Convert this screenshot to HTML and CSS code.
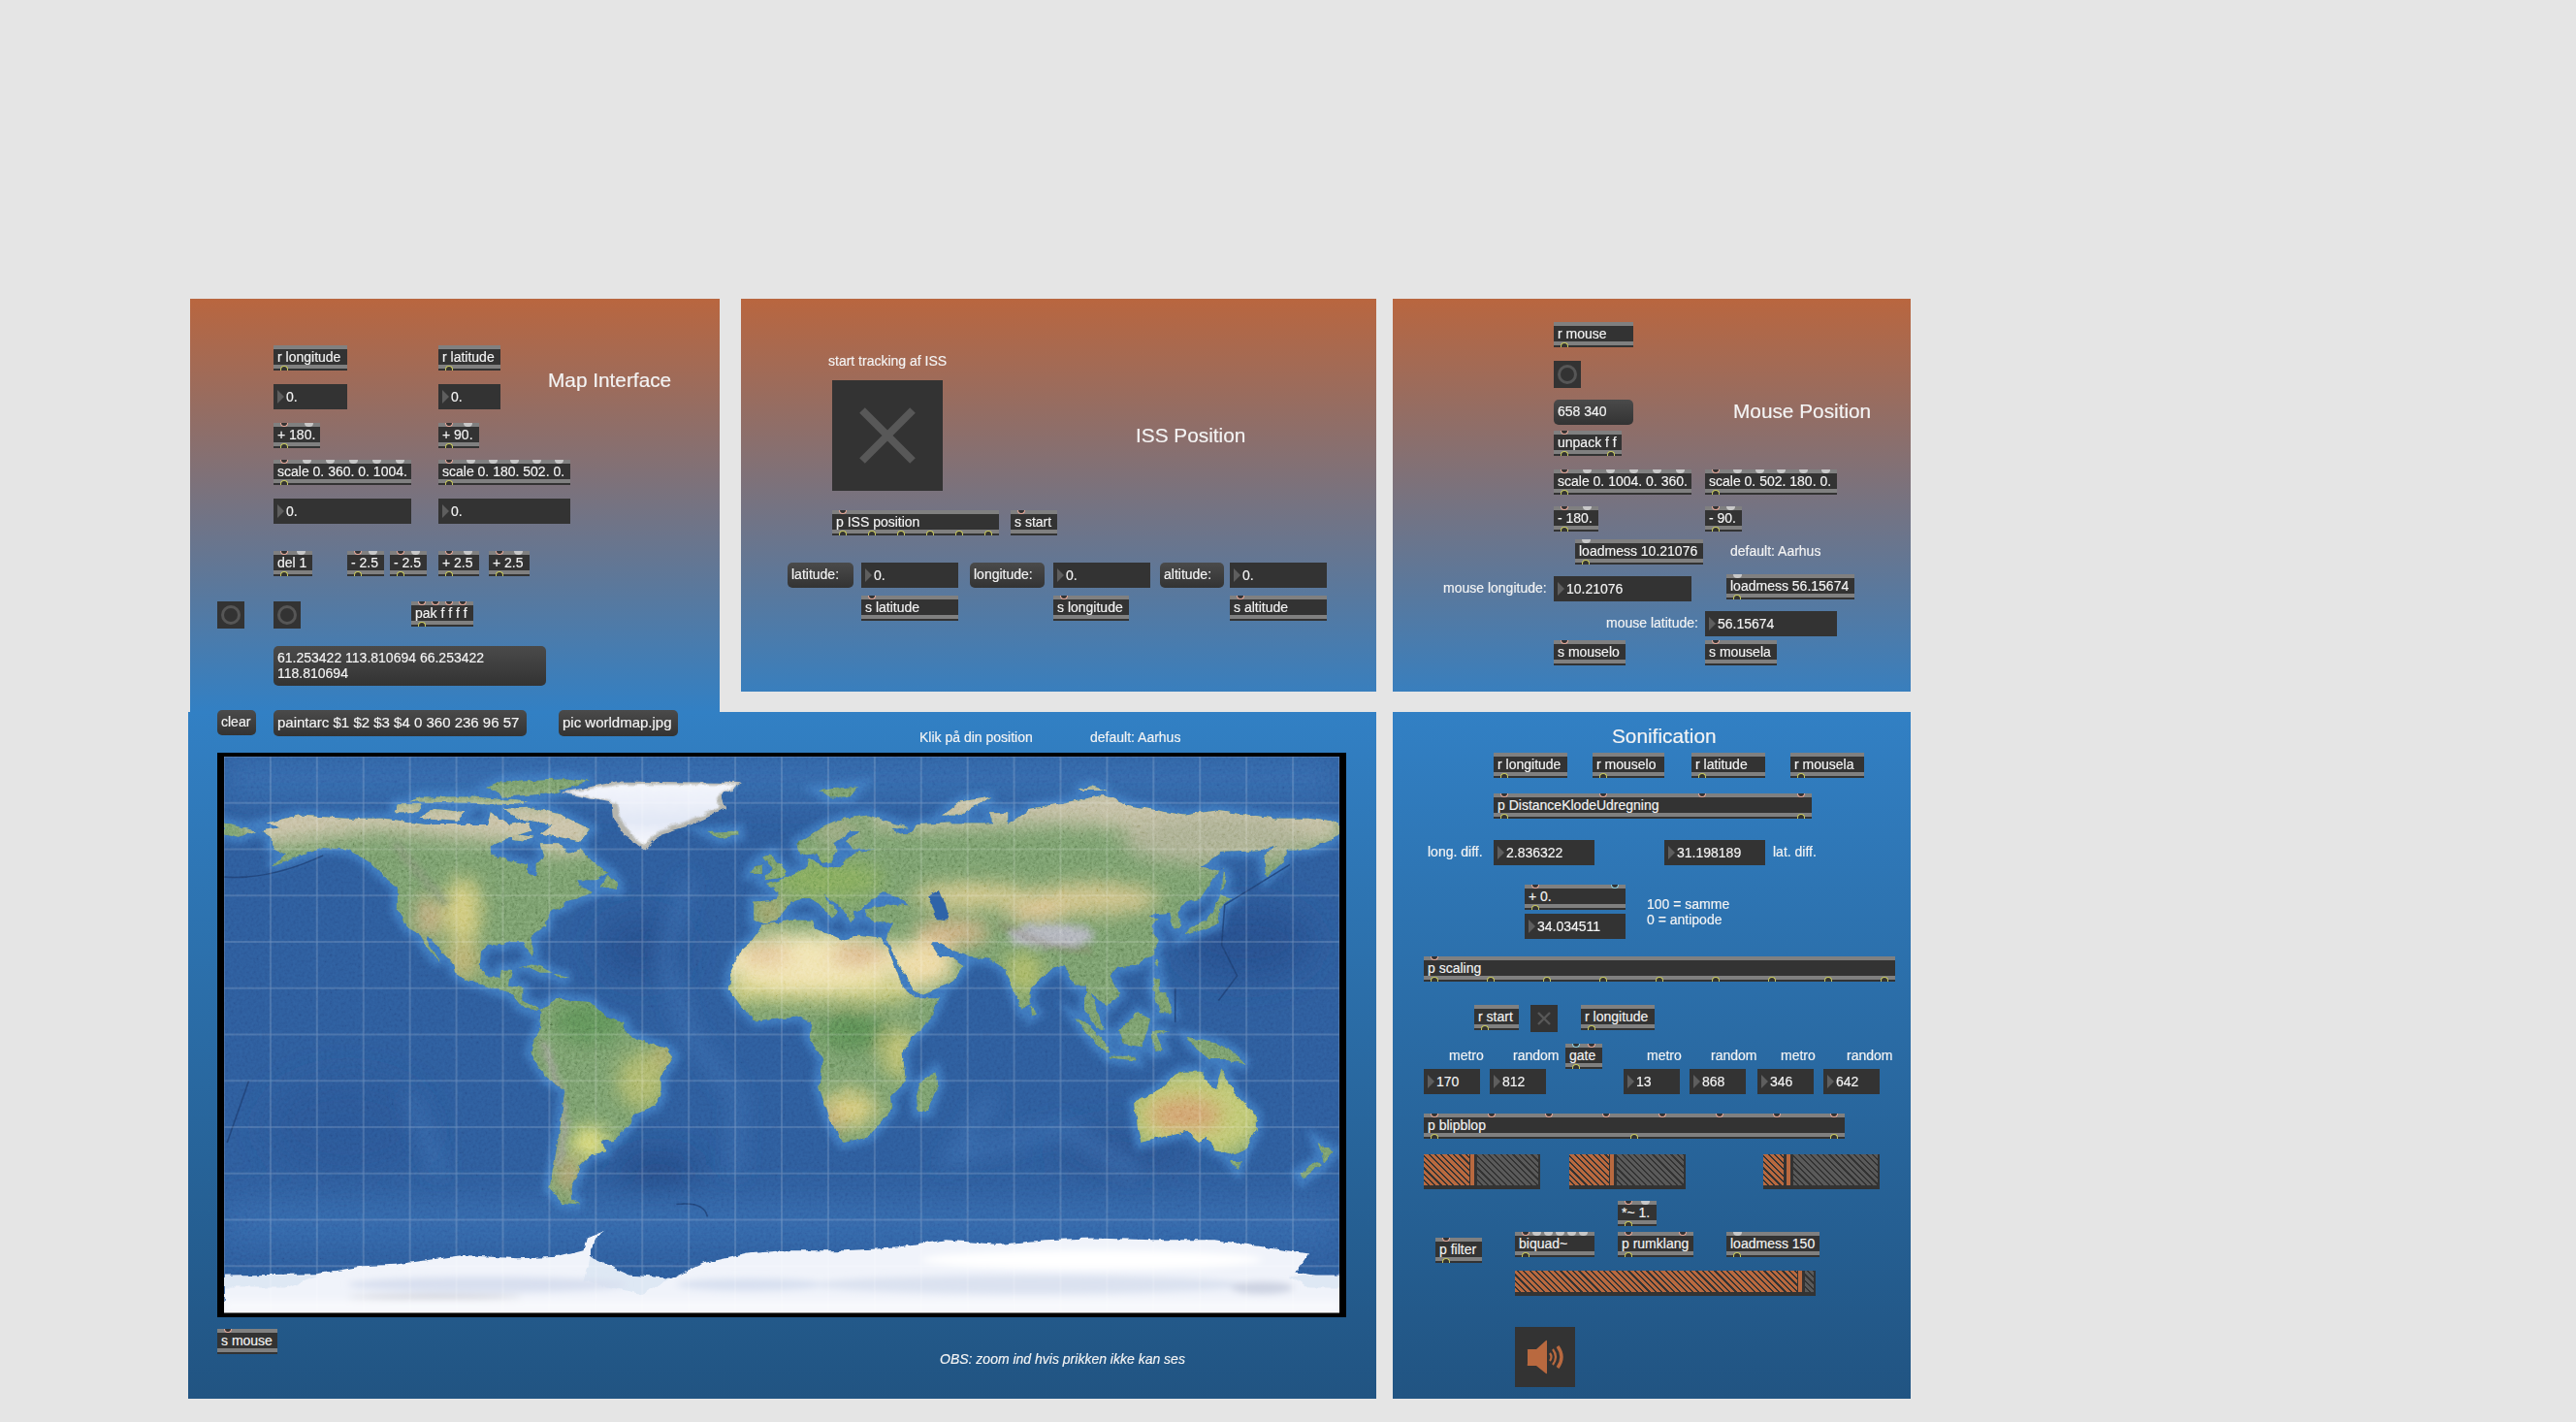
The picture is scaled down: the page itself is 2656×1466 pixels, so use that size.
FILE: index.html
```html
<!DOCTYPE html>
<html lang="en">
<head>
    <meta charset="UTF-8">
    <title>ISS Sonification Patch</title>
    <link rel="stylesheet" href="styles.css">
</head>
<body>
<div class="patch">
    <div class="toprow">
        <!-- Map Interface -->
        <section class="panel panel-map-ui">
            <div class="title m-title">Map Interface</div>
            <div class="obj m-rlong">r longitude<div class="outs"><i></i></div></div>
            <div class="obj m-rlat">r latitude<div class="outs"><i></i></div></div>
            <div class="num m-n1">0.</div>
            <div class="num m-n2">0.</div>
            <div class="obj m-add1"><div class="ins"><i></i><i class="cold"></i></div>+ 180.<div class="outs"><i></i></div></div>
            <div class="obj m-add2"><div class="ins"><i></i><i class="cold"></i></div>+ 90.<div class="outs"><i></i></div></div>
            <div class="obj m-sc1"><div class="ins"><i></i><i class="cold"></i><i class="cold"></i><i class="cold"></i><i class="cold"></i><i class="cold"></i></div>scale 0. 360. 0. 1004.<div class="outs"><i></i></div></div>
            <div class="obj m-sc2"><div class="ins"><i></i><i class="cold"></i><i class="cold"></i><i class="cold"></i><i class="cold"></i><i class="cold"></i></div>scale 0. 180. 502. 0.<div class="outs"><i></i></div></div>
            <div class="num m-n3">0.</div>
            <div class="num m-n4">0.</div>
            <div class="obj m-del"><div class="ins"><i></i><i class="cold"></i></div>del 1<div class="outs"><i></i></div></div>
            <div class="obj m-s1"><div class="ins"><i></i><i class="cold"></i></div>- 2.5<div class="outs"><i></i></div></div>
            <div class="obj m-s2"><div class="ins"><i></i><i class="cold"></i></div>- 2.5<div class="outs"><i></i></div></div>
            <div class="obj m-a1"><div class="ins"><i></i><i class="cold"></i></div>+ 2.5<div class="outs"><i></i></div></div>
            <div class="obj m-a2"><div class="ins"><i></i><i class="cold"></i></div>+ 2.5<div class="outs"><i></i></div></div>
            <div class="bang m-b1"></div>
            <div class="bang m-b2"></div>
            <div class="obj m-pak"><div class="ins"><i></i><i></i><i></i><i></i></div>pak f f f f<div class="outs"><i></i></div></div>
            <div class="msg m-list">61.253422 113.810694 66.253422 118.810694</div>
        </section>

        <!-- ISS Position -->
        <section class="panel panel-iss">
            <div class="label i-start">start tracking af ISS</div>
            <div class="toggle i-toggle">
                <svg viewBox="0 0 114 114"><path d="M31 31L83 83M83 31L31 83" stroke="#585858" stroke-width="8" fill="none"/></svg>
            </div>
            <div class="title i-title">ISS Position</div>
            <div class="obj i-p"><div class="ins"><i></i></div>p ISS position<div class="outs"><i></i><i></i><i></i><i></i><i></i><i></i></div></div>
            <div class="obj i-sstart"><div class="ins"><i></i></div>s start</div>
            <div class="msg i-m1">latitude:</div>
            <div class="num i-n1">0.</div>
            <div class="msg i-m2">longitude:</div>
            <div class="num i-n2">0.</div>
            <div class="msg i-m3">altitude:</div>
            <div class="num i-n3">0.</div>
            <div class="obj i-s1"><div class="ins"><i></i></div>s latitude</div>
            <div class="obj i-s2"><div class="ins"><i></i></div>s longitude</div>
            <div class="obj i-s3"><div class="ins"><i></i></div>s altitude</div>
        </section>
    </div>

    <!-- Mouse Position -->
    <section class="panel panel-mouse">
        <div class="title p-title">Mouse Position</div>
        <div class="obj p-r">r mouse<div class="outs"><i></i></div></div>
        <div class="bang p-b"></div>
        <div class="msg p-msg">658 340</div>
        <div class="obj p-unp"><div class="ins"><i></i></div>unpack f f<div class="outs"><i></i><i></i></div></div>
        <div class="obj p-sc1"><div class="ins"><i></i><i class="cold"></i><i class="cold"></i><i class="cold"></i><i class="cold"></i><i class="cold"></i></div>scale 0. 1004. 0. 360.<div class="outs"><i></i></div></div>
        <div class="obj p-sc2"><div class="ins"><i></i><i class="cold"></i><i class="cold"></i><i class="cold"></i><i class="cold"></i><i class="cold"></i></div>scale 0. 502. 180. 0.<div class="outs"><i></i></div></div>
        <div class="obj p-m1"><div class="ins"><i></i><i class="cold"></i></div>- 180.<div class="outs"><i></i></div></div>
        <div class="obj p-m2"><div class="ins"><i></i><i class="cold"></i></div>- 90.<div class="outs"><i></i></div></div>
        <div class="obj p-l1"><div class="ins"><i class="cold"></i></div>loadmess 10.21076<div class="outs"><i></i></div></div>
        <div class="label p-def">default: Aarhus</div>
        <div class="label p-lonl">mouse longitude:</div>
        <div class="num p-n1">10.21076</div>
        <div class="obj p-l2"><div class="ins"><i class="cold"></i></div>loadmess 56.15674<div class="outs"><i></i></div></div>
        <div class="label p-latl">mouse latitude:</div>
        <div class="num p-n2">56.15674</div>
        <div class="obj p-s1"><div class="ins"><i></i></div>s mouselo</div>
        <div class="obj p-s2"><div class="ins"><i></i></div>s mousela</div>
    </section>

    <!-- World map -->
    <section class="panel panel-world">
        <div class="msg w-clear">clear</div>
        <div class="msg w-arc">paintarc $1 $2 $3 $4 0 360 236 96 57</div>
        <div class="msg w-pic">pic worldmap.jpg</div>
        <div class="label w-klik">Klik på din position</div>
        <div class="label w-def">default: Aarhus</div>
        <div class="mapframe">
            <svg class="worldmap" viewBox="-180 -90 360 180" preserveAspectRatio="none">
                <defs>
                    <path id="land" d="M-168 -66L-162 -67L-166 -68.5L-156 -71L-141 -70L-128 -70L-115 -68L-108 -68L-95 -68L-94 -72L-88 -68L-82 -69L-81 -66L-87 -64L-94 -61L-94 -58.5L-88 -56.5L-82 -55L-82 -52L-79 -51.5L-79 -55L-77 -57L-78 -62L-72 -62L-69 -59L-65 -60L-61 -56L-56 -52.5L-60 -50L-66 -50L-65 -48L-61 -46L-66 -44L-70 -43L-70 -41.5L-74 -40.5L-76 -37L-76 -35L-81 -31.5L-80 -27L-80.5 -25L-82 -27L-83 -30L-88 -30L-90 -29L-94 -29.5L-97 -27L-97.5 -22L-95 -18.5L-91 -18.5L-90.5 -21L-87 -21L-88 -16L-83.5 -15L-83.5 -11L-80 -9L-77.5 -8.5L-80 -7.5L-84 -9L-87 -13L-92 -14.5L-96 -16L-102 -18L-105.5 -20.5L-106 -23L-109 -26L-113 -31L-115 -31.5L-112 -26L-110 -23L-112 -25L-115 -29L-117 -32.5L-120.5 -34.5L-124 -40L-124 -48L-128 -51L-133 -56L-140 -60L-148 -60.5L-152 -59L-158 -57L-165 -54.5L-160 -58.5L-165 -61L-165 -64Z
                    M-80 -73.5L-72 -71.5L-62 -66.5L-65 -62.5L-72 -64L-78 -65L-74 -68L-85 -70L-90 -73Z
                    M-117 -70L-105 -69L-102 -72L-112 -73Z
                    M-125 -72L-118 -72L-116 -74.5L-124 -74.5Z
                    M-90 -77L-75 -78L-62 -82L-70 -83L-90 -82L-95 -80Z
                    M-120 -75.5L-100 -75L-85 -74.5L-82 -75.5L-100 -77L-117 -77Z
                    M-87 -65L-80 -64L-83 -62.5L-87 -63Z
                    M-59 -48L-53 -47L-53 -49L-56 -51.5Z
                    M-85 -22L-80 -23L-74 -20L-78 -20L-82 -22Z
                    M-74 -19.5L-68.5 -18.5L-71 -18Z
                    M-78 -8L-72 -12L-68 -11L-62 -10.5L-57 -6L-51 -4L-50 0L-44 2.5L-37 4.5L-35 7L-39 14L-39 20L-41 23L-48 26L-49 29L-54 34.5L-58 34.5L-57 38L-62 39L-65 42L-65.5 45L-68 50L-68 53L-65 55L-71 54.5L-75 50L-73.5 42L-71.5 30L-70 18L-76 14L-81 6L-80 2L-78 -2L-77.5 -7Z
                    M-6 -35.5L3 -37L10 -37L11 -34L19 -30.5L25 -32L32 -31L34 -28L37 -21L39 -15.5L43 -12L51 -12L48 -5L42 1L39 6L40 15L35 20L35.5 24L32.5 28L28 33L20 35L18 33L15 26L12 17L13.5 8L9 1L9.5 -4L5 -6L-4 -5L-8 -4.5L-13 -9L-17 -14.5L-16 -21L-13 -27.5L-10 -30Z
                    M49.5 12L50.5 16L47 25L44 25L43.5 20L44.5 16Z
                    M-9 -37L-9 -43L-2 -43.5L-1 -46L-5 -48.5L2 -51L8 -54L8.5 -57L11 -55.5L14 -54L19 -54.5L21 -57L24 -59L30 -60L23 -60L21 -63L25 -65.5L22 -65.5L17 -62L18 -59.5L16 -56L13 -55.5L11 -59L6 -58L5 -62L13 -67L20 -70L28 -71L41 -67L35 -66.5L40 -64.5L44 -68L54 -68.5L68 -68.5L67 -72L73 -72L73 -68L80 -73L104 -77.5L113 -74L130 -71L140 -72.5L160 -70L170 -70L180 -68.5L180 -65L177 -62.5L170 -60L163 -60L162 -56L156.5 -51L155.5 -57L160 -61.5L155 -59.5L142 -59L135 -54.5L141 -53L135 -44L130 -42.5L127.5 -39.5L129 -35.5L126.5 -34.5L125 -39.5L121 -39L118 -39L122 -37L119 -35L122 -30.5L120 -26L114 -22.5L108 -21.5L106 -19L109 -13L105 -9L100 -13.5L103 -4L104 -1.5L101 -3L98 -8L98 -16L94.5 -16L91 -22.5L87 -21L80 -15L80 -10L77.5 -8L73 -19L72.5 -21L67 -24.5L61 -25L57 -26.5L50 -30L48 -29.5L51 -25L55 -25L59 -22.5L55 -17L45 -13L43 -14L39 -21L35 -28L34 -31L36 -36.5L30 -36.5L27 -38L27 -40.5L36 -42L41 -41.5L37 -45L33 -46L28 -43L26 -40.5L23 -40L24 -37.5L22 -36.5L19 -41.5L13 -45.5L18 -40L16 -38L12.5 -42L8.5 -44.5L3 -43L0 -39.5L-2 -36.7L-5.5 -36Z
                    M-180 -68.5L-170 -66L-175 -64L-180 -65Z
                    M-5.5 -50L1 -51L1.5 -53L-2 -56L-3 -58.5L-6 -57L-3 -54L-5 -52Z
                    M-10 -52L-6 -52L-6 -55L-9 -54.5Z
                    M-24 -65.5L-14 -66L-14 -64.5L-20 -63.5Z
                    M130 -32L136 -34L141 -36L141.5 -41L145 -44L141.5 -45L140 -41L137 -37L132 -35Z
                    M142 -46L143.5 -50L142.5 -54L142 -50Z
                    M120 -23L121.5 -25L121 -22Z
                    M120 -18L122 -18L122 -14L124 -13L126 -7L122 -7L120 -14Z
                    M95 -5.5L98 -4L104 2L106 6L102 4L98 -1Z
                    M105.5 7L114 7L114.5 8.5L106 7.5Z
                    M109 -1L115 -7L119 -5L117.5 0L116 4L110 3Z
                    M119.5 -1L125 -1L121 0L123 5L120 5.5Z
                    M131 1L141 3L146 6L150 10L144 8L138 8L133 4Z
                    M80 -9.5L82 -7L80.5 -6Z
                    M114 22L122 18L126 14L130 12L136 12L136 15L140 17.5L142 11L146 19L153 26L153 31L150 37L145 39L140 37.5L137 33L135 35L131 31.5L124 33L116 35L115 31Z
                    M145 41L148 41L147 43.5Z
                    M173 35L178 38L175 41.5L174 38Z
                    M173 41L174 42L168 47L167 45Z
                    M12 -79L25 -80.5L22 -77L15 -77Z
                    M52 -71L57 -71L68 -77L58 -75.5Z
                    M95 -79L105 -79L100 -80.5Z"/>
                    <clipPath id="landclip"><use href="#land"/></clipPath>
                    <filter id="blur05"><feGaussianBlur stdDeviation="0.4"/></filter>
                    <filter id="blur1"><feGaussianBlur stdDeviation="1.2"/></filter>
                    <filter id="blur3"><feGaussianBlur stdDeviation="3"/></filter>
                    <filter id="blur6"><feGaussianBlur stdDeviation="5"/></filter>
                    <filter id="rough" x="-2%" y="-2%" width="104%" height="104%">
                        <feTurbulence type="fractalNoise" baseFrequency="0.3" numOctaves="3" seed="4"/>
                        <feDisplacementMap in="SourceGraphic" scale="1.8" xChannelSelector="R" yChannelSelector="G"/>
                    </filter>
                    <filter id="grain" x="0" y="0" width="100%" height="100%">
                        <feTurbulence type="fractalNoise" baseFrequency="1.1" numOctaves="3" seed="9"/>
                        <feColorMatrix type="matrix" values="1.3 0 0 0 -0.15 1.3 0 0 0 -0.15 1.3 0 0 0 -0.15 0 0 0 0 1"/>
                    </filter>
                    <linearGradient id="ice" x1="0" x2="0" y1="0" y2="1">
                        <stop offset="0" stop-color="#f4f6fc"/>
                        <stop offset="0.6" stop-color="#e2e8f6"/>
                        <stop offset="1" stop-color="#f7f8fd"/>
                    </linearGradient>
                    <pattern id="grid" x="7.5" y="7.5" width="15" height="15" patternUnits="userSpaceOnUse">
                        <path d="M7.5 0V15M0 7.5H15" stroke="#fff" stroke-opacity="0.28" stroke-width="0.32" fill="none"/>
                    </pattern>
                </defs>

                <!-- ocean -->
                <rect x="-180" y="-90" width="360" height="180" fill="#2d5b9b"/>
                <g filter="url(#blur6)">
                    <rect x="-180" y="-90" width="360" height="14" fill="#3669ac"/>
                    <rect x="-180" y="54" width="360" height="14" fill="#3467aa"/>
                    <ellipse cx="-45" cy="-28" rx="14" ry="10" fill="#284f8c"/>
                    <ellipse cx="-40" cy="44" rx="14" ry="5" fill="#234781"/>
                    <ellipse cx="150" cy="-30" rx="22" ry="12" fill="#28508d"/>
                    <ellipse cx="110" cy="38" rx="22" ry="7" fill="#2a5390"/>
                    <ellipse cx="-140" cy="30" rx="26" ry="16" fill="#2b5796"/>
                </g>
                <path d="M-30 -50L-38 -25L-30 0L-14 20L-15 45M68 20L55 40L90 30L115 45M-120 20L-110 45" stroke="#3869ab" stroke-width="4" fill="none" filter="url(#blur3)"/>
                <use href="#land" fill="none" stroke="#3e77bd" stroke-width="4" filter="url(#blur1)"/>
                <path d="M-180 -51Q-165 -50 -148 -58M164 -55L143 -42L142 -29L147 -19L141 -11M127 -15L127 -4M-172 15L-179 35M-34 55Q-25 54 -24 59" fill="none" stroke="#1f3f72" stroke-width="0.5" stroke-opacity="0.85"/>
                <rect class="grain-sea" x="-180" y="-90" width="360" height="180" filter="url(#grain)"/>

                <!-- land -->
                <g filter="url(#rough)">
                    <use href="#land" fill="#6f9c5e"/>
                    <g clip-path="url(#landclip)">
                        <g filter="url(#blur3)">
                            <path d="M-175 -75H-60V-60L-72 -58L-85 -62L-110 -64L-130 -66L-170 -61Z" fill="#c6bea2"/>
                            <path d="M30 -82H180V-62L150 -61L120 -66L90 -68L60 -67L30 -67Z" fill="#bfba9d"/>
                            <ellipse cx="140" cy="-63" rx="30" ry="8" fill="#a7ab8c"/>
                            <ellipse cx="-103" cy="-40" rx="6" ry="11" fill="#d0c878"/>
                            <ellipse cx="-114" cy="-38" rx="4" ry="7" fill="#c3a97a"/>
                            <ellipse cx="-103" cy="-24" rx="6" ry="6" fill="#b9ae6e"/>
                            <rect x="-18" y="-17" width="60" height="6" fill="#d6cf7a"/>
                            <ellipse cx="10" cy="-24" rx="32" ry="9" fill="#f0e2ae"/>
                            <ellipse cx="25" cy="-26" rx="9" ry="3" fill="#d4a77c"/>
                            <ellipse cx="-5" cy="-26" rx="8" ry="3" fill="#dfbb8e"/>
                            <ellipse cx="23" cy="-1" rx="11" ry="6" fill="#568650"/>
                            <ellipse cx="38" cy="6" rx="6" ry="8" fill="#b8bc6d"/>
                            <ellipse cx="22" cy="24" rx="9" ry="6" fill="#d3c878"/>
                            <ellipse cx="16" cy="28" rx="3" ry="4" fill="#c99d6e"/>
                            <ellipse cx="46" cy="-23" rx="10" ry="8" fill="#ecd8a0"/>
                            <ellipse cx="55" cy="-33" rx="12" ry="4" fill="#d1ae80"/>
                            <ellipse cx="62" cy="-45" rx="20" ry="4" fill="#d4c585"/>
                            <ellipse cx="100" cy="-44" rx="22" ry="5" fill="#cfc083"/>
                            <ellipse cx="82" cy="-39" rx="10" ry="3" fill="#dcc08f"/>
                            <ellipse cx="78" cy="-20" rx="6" ry="7" fill="#a7b564"/>
                            <ellipse cx="15" cy="-50" rx="18" ry="6" fill="#7fa658"/>
                            <ellipse cx="-4" cy="-40" rx="4" ry="3" fill="#c1a86a"/>
                            <ellipse cx="18" cy="-66" rx="7" ry="5" fill="#97a47c"/>
                            <ellipse cx="-62" cy="-4" rx="12" ry="7" fill="#5b8b55"/>
                            <ellipse cx="-45" cy="15" rx="8" ry="9" fill="#a9b468"/>
                            <ellipse cx="-38" cy="7" rx="3" ry="4" fill="#c3ae6b"/>
                            <ellipse cx="-62" cy="35" rx="6" ry="5" fill="#e2de78"/>
                            <ellipse cx="-69" cy="45" rx="3" ry="6" fill="#bf9f6f"/>
                            <ellipse cx="134" cy="26" rx="22" ry="14" fill="#bcc46e"/>
                            <ellipse cx="130" cy="26" rx="12" ry="6" fill="#cf9f6c"/>
                        </g>
                        <g filter="url(#blur1)">
                            <ellipse cx="87" cy="-32" rx="14" ry="4" fill="#adb0b8"/>
                            <path d="M-77 2L-72 18L-70 30L-72 42" stroke="#9a9892" stroke-width="2" fill="none"/>
                            <path d="M-125 -62L-115 -50L-108 -42" stroke="#7f8f72" stroke-width="2" fill="none"/>
                            <path d="M70 -36L85 -29L100 -27" stroke="#7a6f5c" stroke-width="1" fill="none"/>
                        </g>
                        <rect class="grain-land" x="-180" y="-90" width="360" height="180" filter="url(#grain)"/>
                    </g>
                    <!-- Caspian -->
                    <path d="M47 -45L51 -47L53 -42L54 -37L50 -37.5L49 -41Z" fill="#2f63a8"/>
                    <!-- Greenland and Antarctica -->
                    <path d="M-71 -78.4L-53 -82L-12.5 -81.5L-19.5 -77.4L-18 -73L-29 -68L-39 -65L-44 -60L-50 -64L-54.5 -70L-55 -75Z" fill="#b5b5ae"/>
                    <path d="M-70 -78.4L-52 -81L-14 -81L-21 -77L-20 -73.5L-30 -69L-40 -66L-44 -61L-48.5 -64.5L-52 -70L-53 -75Z" fill="url(#ice)" filter="url(#blur05)"/>
                    <path d="M-180 78L-150 77.5L-135 75L-125 74.5L-103 71.5L-85 72.5L-72 72L-64 70L-63 66L-57 63.5L-60 66L-62 70L-62 75L-49 78L-36 79L-25 74L-11 71L0 70L20 70L38 69L53 66.5L70 68L85 66.5L100 66L120 66.5L140 66.5L160 69.5L170 71L166 77L172 78L180 78L180 92L-180 92Z" fill="#f0f3fa"/>
                    <path d="M-180 78L-150 78L-160 82L-180 82Z M-62 72L-49 78L-36 79L-45 84L-64 80Z M164 78L180 78L180 82L170 82Z" fill="#dee8f4"/>
                </g>
                <!-- ice shading -->
                <g filter="url(#blur1)">
                    <ellipse cx="-95" cy="81" rx="45" ry="2.5" fill="#d8dfef"/>
                    <ellipse cx="-112" cy="85" rx="28" ry="0.4" fill="#a8a9b2"/>
                    <ellipse cx="-10" cy="81" rx="24" ry="2" fill="#d8e0f0"/>
                    <ellipse cx="80" cy="81" rx="70" ry="3" fill="#dbe2f0"/>
                    <ellipse cx="100" cy="73" rx="55" ry="3" fill="#ffffff"/>
                    <ellipse cx="155" cy="82" rx="10" ry="2" fill="#cdd3e2"/>
                    <rect x="-180" y="86" width="360" height="4" fill="#f8f9fd"/>
                </g>
                <rect x="-180" y="-90" width="360" height="180" fill="url(#grid)"/>
            </svg>
        </div>
        <div class="obj w-smouse"><div class="ins"><i></i></div>s mouse</div>
        <div class="label w-obs">OBS: zoom ind hvis prikken ikke kan ses</div>
    </section>

    <!-- Sonification -->
    <section class="panel panel-sound">
        <div class="title s-title">Sonification</div>
        <div class="obj s-r1">r longitude<div class="outs"><i></i></div></div>
        <div class="obj s-r2">r mouselo<div class="outs"><i></i></div></div>
        <div class="obj s-r3">r latitude<div class="outs"><i></i></div></div>
        <div class="obj s-r4">r mousela<div class="outs"><i></i></div></div>
        <div class="obj s-dist"><div class="ins"><i></i><i></i><i></i><i></i></div>p DistanceKlodeUdregning<div class="outs"><i></i><i></i></div></div>
        <div class="label s-long">long. diff.</div>
        <div class="num s-n1">2.836322</div>
        <div class="num s-n2">31.198189</div>
        <div class="label s-lat">lat. diff.</div>
        <div class="obj s-add"><div class="ins"><i></i><i class="sig"></i></div>+ 0.<div class="outs"><i></i></div></div>
        <div class="num s-n3">34.034511</div>
        <div class="label s-same">100 = samme</div>
        <div class="label s-anti">0 = antipode</div>
        <div class="obj s-scaling"><div class="ins"><i></i></div>p scaling<div class="outs"><i></i><i></i><i></i><i></i><i></i><i></i><i></i><i></i><i></i></div></div>
        <div class="obj s-rstart">r start<div class="outs"><i></i></div></div>
        <div class="toggle s-toggle">
            <svg viewBox="0 0 28 28"><path d="M8 8L20 20M20 8L8 20" stroke="#585858" stroke-width="2.4" fill="none"/></svg>
        </div>
        <div class="obj s-r5">r longitude<div class="outs"><i></i></div></div>
        <div class="label s-t1">metro</div>
        <div class="label s-t2">random</div>
        <div class="obj s-gate"><div class="ins"><i class="sig"></i><i></i></div>gate<div class="outs"><i></i></div></div>
        <div class="label s-t3">metro</div>
        <div class="label s-t4">random</div>
        <div class="label s-t5">metro</div>
        <div class="label s-t6">random</div>
        <div class="num s-i1">170</div>
        <div class="num s-i2">812</div>
        <div class="num s-i3">13</div>
        <div class="num s-i4">868</div>
        <div class="num s-i5">346</div>
        <div class="num s-i6">642</div>
        <div class="obj s-blip"><div class="ins"><i></i><i></i><i></i><i></i><i></i><i></i><i></i><i></i></div>p blipblop<div class="outs"><i></i><i></i><i></i></div></div>
        <div class="gain s-g1"><div class="fill"></div><div class="knob"></div><div class="rest"></div></div>
        <div class="gain s-g2"><div class="fill"></div><div class="knob"></div><div class="rest"></div></div>
        <div class="gain s-g3"><div class="fill"></div><div class="knob"></div><div class="rest"></div></div>
        <div class="obj s-mul"><div class="ins"><i></i><i class="cold"></i></div>*~ 1.<div class="outs"><i></i></div></div>
        <div class="obj s-filter"><div class="ins"><i></i></div>p filter<div class="outs"><i></i></div></div>
        <div class="obj s-biquad"><div class="ins"><i></i><i class="cold"></i><i class="cold"></i><i class="cold"></i><i class="cold"></i><i class="cold"></i></div>biquad~<div class="outs"><i></i></div></div>
        <div class="obj s-rum"><div class="ins"><i></i><i></i></div>p rumklang<div class="outs"><i></i></div></div>
        <div class="obj s-load"><div class="ins"><i class="cold"></i></div>loadmess 150<div class="outs"><i></i></div></div>
        <div class="gain s-master"><div class="fill"></div><div class="knob"></div><div class="rest"></div></div>
        <div class="ezdac">
            <svg viewBox="0 0 62 62">
                <path d="M13 24Q12 23 14 23H22L32 14Q33 13 33 15V47Q33 49 32 48L22 40H14Q12 40 13 38Z" fill="#b9693f"/>
                <g fill="none" stroke="#b9693f" stroke-width="2.2">
                    <path d="M36 27Q39 31 36 35"/>
                    <path d="M39 23Q45 31 39 39"/>
                </g>
                <path d="M44 20Q52 31 44 42" fill="none" stroke="#b9693f" stroke-width="3.4"/>
            </svg>
        </div>
    </section>
</div>
</body>
</html>
```

FILE: styles.css
```css
html, body {
    margin: 0;
    padding: 0;
    height: 100%;
    overflow: hidden;
    background-color: #e5e5e5;
}
body {
    font-family: "Liberation Sans", Arial, sans-serif;
    font-size: 14px;
    color: #f4f4f4;
    -webkit-text-stroke: 0.15px;
}

/* panels sit in a plain grid, the patch objects float on top of them */
.patch {
    display: grid;
    grid-template-columns: 1225px 534px;
    grid-template-rows: 426px 708px;
    column-gap: 17px;
    margin: 308px 0 0 194px;
}
.toprow {
    display: flex;
    align-items: flex-start;
    gap: 22px;
    padding-left: 2px;
}
.panel {
    position: relative;
    background: linear-gradient(#b9663f 308px, #3280c4 734px, #215482 1442px) fixed;
}
.panel-map-ui { width: 546px; height: 426px; }
.panel-iss { width: 655px; height: 405px; }
.panel-mouse { height: 405px; }
.panel-world, .panel-sound { height: 708px; }

/* Max objects */
.obj, .num, .msg, .bang, .toggle, .gain, .ezdac {
    position: absolute;
    box-sizing: border-box;
    background-color: #333;
}
.obj {
    height: 26px;
    padding: 0 4px;
    line-height: 25px;
    white-space: nowrap;
    background: linear-gradient(#808080 4px, #333 4px 20px, #808080 20px 24px, #333 24px);
}
.num {
    height: 26px;
    padding-left: 13px;
    line-height: 26px;
}
.num::before {
    content: "";
    position: absolute;
    left: 4px;
    top: 6px;
    border-left: 7px solid #5e5e5e;
    border-top: 7px solid transparent;
    border-bottom: 7px solid transparent;
}
.msg {
    height: 25.5px;
    padding: 0 4px;
    border-radius: 5px;
    line-height: 25px;
    white-space: nowrap;
    background: linear-gradient(#4a4a4a, #333);
}
.bang {
    width: 28px;
    height: 28px;
}
.bang::after {
    content: "";
    position: absolute;
    left: 4px;
    top: 4px;
    width: 20px;
    height: 20px;
    box-sizing: border-box;
    border: 3px solid #565656;
    border-radius: 50%;
}
.toggle svg, .ezdac svg {
    display: block;
    width: 100%;
    height: 100%;
}

/* inlets and outlets */
.ins, .outs {
    position: absolute;
    left: 7px;
    right: 7px;
    display: flex;
    justify-content: space-between;
}
.ins { top: 0; }
.outs { bottom: 0; }
.ins i, .outs i {
    display: block;
    box-sizing: border-box;
    width: 8px;
    height: 4px;
    background-color: #333;
}
.ins i {
    border: 1px solid #eaa99a;
    border-top: 0;
    border-radius: 0 0 5px 5px;
}
.ins i.cold {
    width: 9px;
    background-color: #c8c8c8;
    border: 0;
}
.ins i.sig { border-color: #8fd4e4; }
.outs i {
    height: 5px;
    border: 1px solid #c8c95e;
    border-bottom: 0;
    border-radius: 5px 5px 0 0;
}

/* gain sliders */
.gain {
    display: flex;
    padding-bottom: 4px;
    padding-right: 2px;
}
.gain .fill {
    background: repeating-linear-gradient(45deg, #b9693f 0 3px, #333 3px 4.5px);
}
.gain .knob {
    width: 4px;
    margin-left: 1px;
    background-color: #b9693f;
}
.gain .rest {
    flex: 1;
    margin-left: 3px;
    background: repeating-linear-gradient(45deg, #5a5a5a 0 3px, #333 3px 4.5px);
}

.label {
    position: absolute;
    line-height: 20px;
    white-space: nowrap;
}
.title {
    position: absolute;
    font-size: 20.8px;
    line-height: 24px;
    white-space: nowrap;
}

/* Map Interface */
.m-title { left: 369px; top: 72px; }
.m-rlong { left: 86px; top: 48px; width: 76px; }
.m-rlat { left: 256px; top: 48px; width: 64px; }
.m-n1 { left: 86px; top: 88px; width: 76px; }
.m-n2 { left: 256px; top: 88px; width: 64px; }
.m-add1 { left: 86px; top: 128px; width: 48px; }
.m-add2 { left: 256px; top: 128px; width: 42px; }
.m-sc1 { left: 86px; top: 166px; width: 142px; }
.m-sc2 { left: 256px; top: 166px; width: 136px; }
.m-n3 { left: 86px; top: 206px; width: 142px; }
.m-n4 { left: 256px; top: 206px; width: 136px; }
.m-del { left: 86px; top: 260px; width: 40px; }
.m-s1 { left: 162px; top: 260px; width: 38px; }
.m-s2 { left: 206px; top: 260px; width: 38px; }
.m-a1 { left: 256px; top: 260px; width: 42px; }
.m-a2 { left: 308px; top: 260px; width: 42px; }
.m-b1 { left: 28px; top: 312px; }
.m-b2 { left: 86px; top: 312px; }
.m-pak { left: 228px; top: 312px; width: 64px; }
.m-list {
    left: 86px;
    top: 358px;
    width: 281px;
    height: 41px;
    padding-top: 4px;
    line-height: 16px;
    white-space: normal;
}

/* ISS Position */
.i-start { left: 90px; top: 54px; }
.i-toggle { left: 94px; top: 84px; width: 114px; height: 114px; }
.i-title { left: 407px; top: 129px; }
.i-p { left: 94px; top: 218px; width: 172px; }
.i-sstart { left: 278px; top: 218px; width: 48px; }
.i-m1 { left: 48px; top: 272px; width: 68px; }
.i-n1 { left: 124px; top: 272px; width: 100px; }
.i-m2 { left: 236px; top: 272px; width: 77px; }
.i-n2 { left: 322px; top: 272px; width: 100px; }
.i-m3 { left: 432px; top: 272px; width: 66px; }
.i-n3 { left: 504px; top: 272px; width: 100px; }
.i-s1 { left: 124px; top: 306px; width: 100px; }
.i-s2 { left: 322px; top: 306px; width: 78px; }
.i-s3 { left: 504px; top: 306px; width: 100px; }

/* Mouse Position */
.p-title { left: 351px; top: 104px; }
.p-r { left: 166px; top: 24px; width: 82px; }
.p-b { left: 166px; top: 64px; }
.p-msg { left: 166px; top: 104px; width: 82px; }
.p-unp { left: 166px; top: 136px; width: 70px; }
.p-sc1 { left: 166px; top: 176px; width: 142px; }
.p-sc2 { left: 322px; top: 176px; width: 136px; }
.p-m1 { left: 166px; top: 214px; width: 46px; }
.p-m2 { left: 322px; top: 214px; width: 38px; }
.p-l1 { left: 188px; top: 248px; width: 132px; }
.p-def { left: 348px; top: 250px; }
.p-lonl { left: 52px; top: 288px; }
.p-n1 { left: 166px; top: 286px; width: 142px; }
.p-l2 { left: 344px; top: 284px; width: 132px; }
.p-latl { left: 220px; top: 324px; }
.p-n2 { left: 322px; top: 322px; width: 136px; }
.p-s1 { left: 166px; top: 352px; width: 74px; }
.p-s2 { left: 322px; top: 352px; width: 74px; }

/* World map */
.w-clear { left: 30px; top: -2px; width: 40px; }
.w-arc { left: 88px; top: -2px; width: 261px; height: 26.5px; font-size: 15px; }
.w-pic { left: 382px; top: -2px; width: 123px; height: 26.5px; font-size: 15px; }
.w-klik { left: 754px; top: 16px; }
.w-def { left: 930px; top: 16px; }
.mapframe {
    position: absolute;
    left: 30px;
    top: 42px;
    width: 1164px;
    height: 582px;
    box-sizing: border-box;
    padding: 4px 7px;
    background-color: #000;
}
.worldmap {
    display: block;
    width: 1150px;
    height: 573px;
    border-bottom: 1px solid #777;
}
.grain-sea {
    mix-blend-mode: overlay;
    opacity: 0.1;
}
.grain-land {
    mix-blend-mode: overlay;
    opacity: 0.22;
}
.w-smouse { left: 30px; top: 636px; width: 62px; }
.w-obs { left: 775px; top: 657px; font-style: italic; }

/* Sonification */
.s-title { left: 226px; top: 13px; }
.s-r1 { left: 104px; top: 42px; width: 76px; }
.s-r2 { left: 206px; top: 42px; width: 74px; }
.s-r3 { left: 308px; top: 42px; width: 76px; }
.s-r4 { left: 410px; top: 42px; width: 76px; }
.s-dist { left: 104px; top: 84px; width: 328px; }
.s-long { left: 36px; top: 134px; }
.s-n1 { left: 104px; top: 132px; width: 104px; }
.s-n2 { left: 280px; top: 132px; width: 104px; }
.s-lat { left: 392px; top: 134px; }
.s-add { left: 136px; top: 178px; width: 104px; }
.s-n3 { left: 136px; top: 208px; width: 104px; }
.s-same { left: 262px; top: 188px; }
.s-anti { left: 262px; top: 204px; }
.s-scaling { left: 32px; top: 252px; width: 486px; }
.s-rstart { left: 84px; top: 302px; width: 46px; }
.s-toggle { left: 142px; top: 302px; width: 28px; height: 28px; }
.s-r5 { left: 194px; top: 302px; width: 76px; }
.s-t1 { left: 58px; top: 344px; }
.s-t2 { left: 124px; top: 344px; }
.s-gate { left: 178px; top: 342px; width: 38px; }
.s-t3 { left: 262px; top: 344px; }
.s-t4 { left: 328px; top: 344px; }
.s-t5 { left: 400px; top: 344px; }
.s-t6 { left: 468px; top: 344px; }
.s-i1 { left: 32px; top: 368px; width: 58px; }
.s-i2 { left: 100px; top: 368px; width: 58px; }
.s-i3 { left: 238px; top: 368px; width: 58px; }
.s-i4 { left: 306px; top: 368px; width: 58px; }
.s-i5 { left: 376px; top: 368px; width: 58px; }
.s-i6 { left: 444px; top: 368px; width: 58px; }
.s-blip { left: 32px; top: 414px; width: 434px; }
.s-g1, .s-g2, .s-g3 { top: 456px; width: 120px; height: 36px; }
.s-g1 { left: 32px; }
.s-g2 { left: 182px; }
.s-g3 { left: 382px; }
.s-g1 .fill { width: 47px; }
.s-g2 .fill { width: 41px; }
.s-g3 .fill { width: 21px; margin-right: 2px; }
.s-mul { left: 232px; top: 504px; width: 40px; }
.s-filter { left: 44px; top: 542px; width: 48px; }
.s-biquad { left: 126px; top: 536px; width: 82px; }
.s-rum { left: 232px; top: 536px; width: 78px; }
.s-load { left: 344px; top: 536px; width: 96px; }
.s-master { left: 126px; top: 576px; width: 310px; height: 26px; }
.s-master .fill { width: 291px; }
.ezdac { left: 126px; top: 634px; width: 62px; height: 62px; }
```
